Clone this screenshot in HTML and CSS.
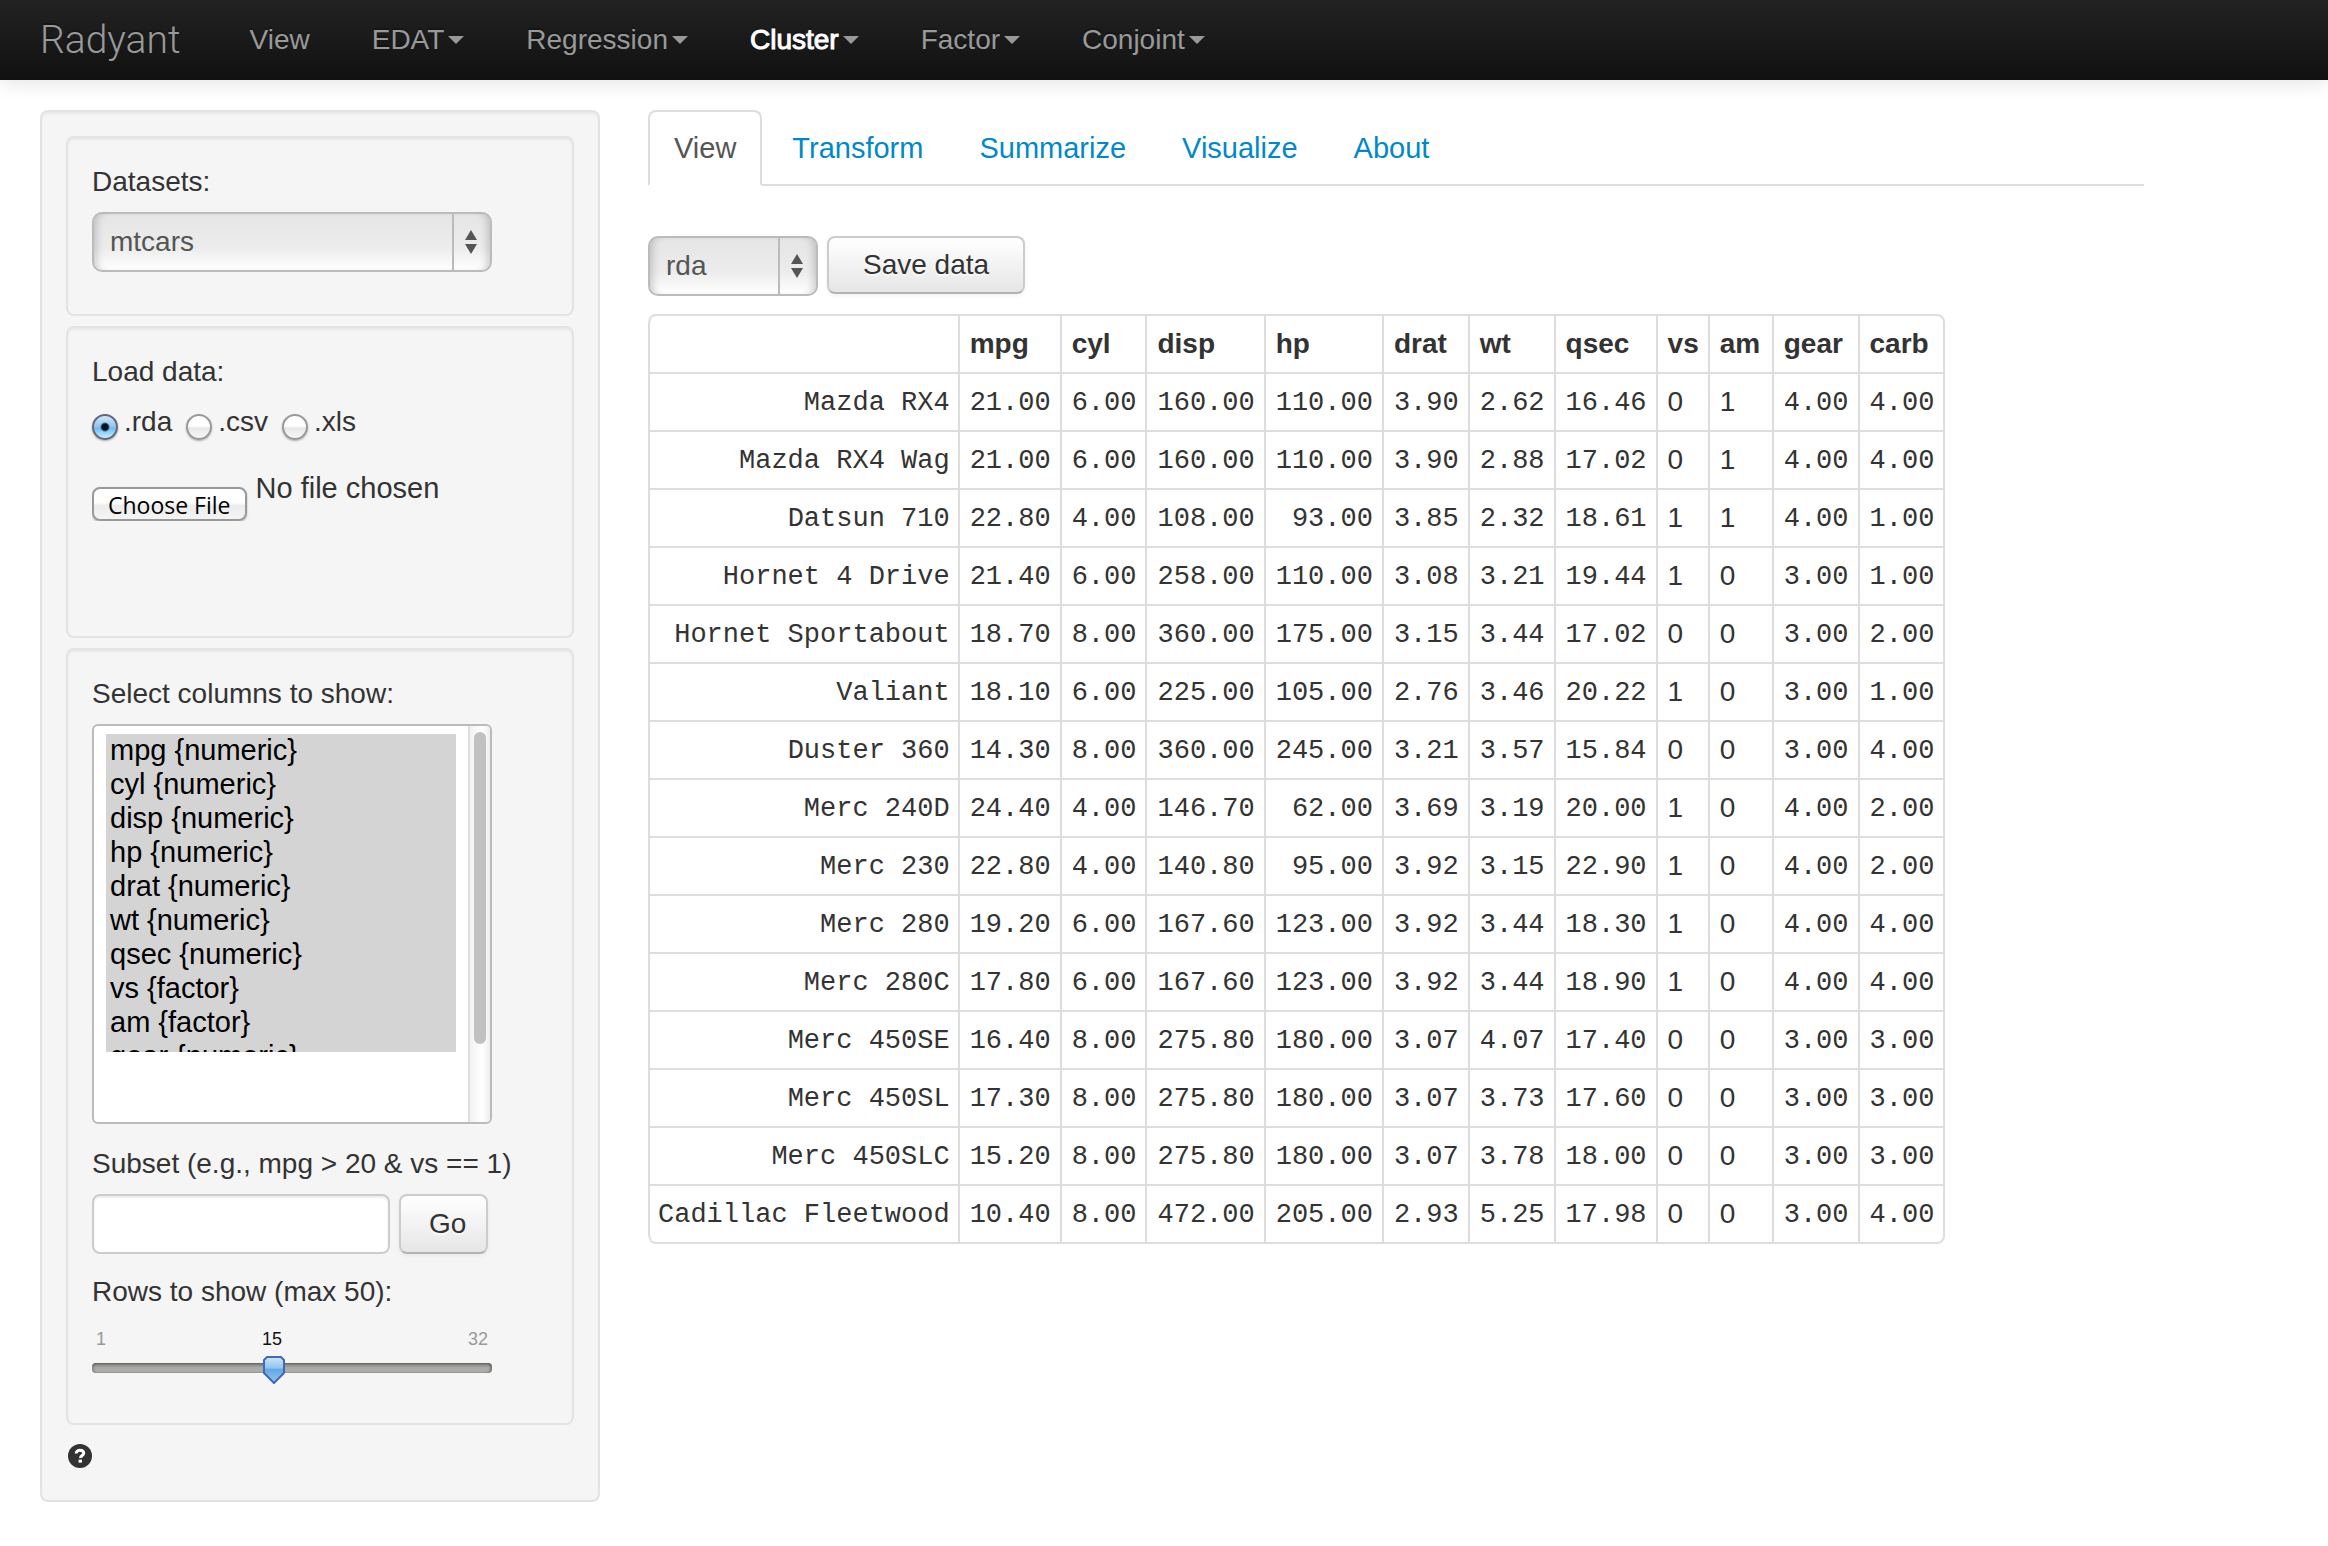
FILE: index.html
```html
<!DOCTYPE html>
<html lang="en">
<head>
<meta charset="utf-8">
<title>Radyant</title>
<link rel="stylesheet" href="styles.css">
</head>
<body>
<header class="navbar">
  <a class="brand" href="#">Radyant</a>
  <nav class="nav">
    <a href="#">View</a>
    <a href="#">EDAT<span class="caret"></span></a>
    <a href="#">Regression<span class="caret"></span></a>
    <a href="#" class="active">Cluster<span class="caret"></span></a>
    <a href="#">Factor<span class="caret"></span></a>
    <a href="#">Conjoint<span class="caret"></span></a>
  </nav>
</header>

<div class="layout">
  <aside class="well sidebar">
    <section class="well panel">
      <label class="label" for="datasets">Datasets:</label>
      <div class="select select-wide">
        <select id="datasets"><option>mtcars</option></select>
        <svg class="arrows" viewBox="0 0 38 56" aria-hidden="true"><path class="rule" d="M1 0V56"/><path d="M13 26 19 16 25 26ZM13 30H25L19 40Z"/></svg>
      </div>
    </section>

    <section class="well panel panel-load">
      <div class="label" id="load-label">Load data:</div>
      <div class="radios" role="radiogroup" aria-labelledby="load-label">
        <label class="radio"><input type="radio" name="format" checked>.rda</label>
        <label class="radio"><input type="radio" name="format">.csv</label>
        <label class="radio"><input type="radio" name="format">.xls</label>
      </div>
      <input class="file" type="file" aria-label="Choose File">
    </section>

    <section class="well panel">
      <label class="label" for="columns">Select columns to show:</label>
      <div class="listbox">
        <select id="columns" multiple>
          <option selected>mpg {numeric}</option>
          <option selected>cyl {numeric}</option>
          <option selected>disp {numeric}</option>
          <option selected>hp {numeric}</option>
          <option selected>drat {numeric}</option>
          <option selected>wt {numeric}</option>
          <option selected>qsec {numeric}</option>
          <option selected>vs {factor}</option>
          <option selected>am {factor}</option>
          <option selected>gear {numeric}</option>
          <option selected>carb {numeric}</option>
        </select>
        <div class="track"><div class="thumb"></div></div>
      </div>
      <label class="label" for="subset">Subset (e.g., mpg &gt; 20 &amp; vs == 1)</label>
      <div class="subset-row">
        <input class="text" id="subset" type="text">
        <button class="btn btn-go" type="button">Go</button>
      </div>
      <label class="label" for="rows">Rows to show (max 50):</label>
      <div class="slider">
        <div class="scale">
          <span>1</span>
          <output for="rows" style="left:45%">15</output>
          <span>32</span>
        </div>
        <input id="rows" type="range" min="1" max="32" value="15">
      </div>
    </section>

    <a class="help" href="#" aria-label="Help">
      <svg viewBox="0 0 24 24" aria-hidden="true"><circle cx="12" cy="12" r="12"/><path class="mark" d="M8.2 9.6C8.2 7.4 9.8 6.200 12 6.200C14.300 6.200 15.700 7.400 15.700 9.200C15.700 11.400 12.500 11.600 12.500 14"/><path class="dot" d="M10.600 15.600H14V18.600H10.600Z"/></svg>
    </a>
  </aside>

  <main>
    <nav class="tabs">
      <a href="#" class="active">View</a>
      <a href="#">Transform</a>
      <a href="#">Summarize</a>
      <a href="#">Visualize</a>
      <a href="#">About</a>
    </nav>
    <div class="toolbar">
      <div class="select select-narrow">
        <select aria-label="File format"><option>rda</option></select>
        <svg class="arrows" viewBox="0 0 38 56" aria-hidden="true"><path class="rule" d="M1 0V56"/><path d="M13 26 19 16 25 26ZM13 30H25L19 40Z"/></svg>
      </div>
      <button class="btn btn-save" type="button">Save data</button>
    </div>
    <table class="data">
      <thead>
        <tr><th></th><th>mpg</th><th>cyl</th><th>disp</th><th>hp</th><th>drat</th><th>wt</th><th>qsec</th><th>vs</th><th class="am">am</th><th>gear</th><th>carb</th></tr>
      </thead>
      <tbody>
        <tr><td>Mazda RX4</td><td>21.00</td><td>6.00</td><td>160.00</td><td>110.00</td><td>3.90</td><td>2.62</td><td>16.46</td><td class="f">0</td><td class="f">1</td><td>4.00</td><td>4.00</td></tr>
        <tr><td>Mazda RX4 Wag</td><td>21.00</td><td>6.00</td><td>160.00</td><td>110.00</td><td>3.90</td><td>2.88</td><td>17.02</td><td class="f">0</td><td class="f">1</td><td>4.00</td><td>4.00</td></tr>
        <tr><td>Datsun 710</td><td>22.80</td><td>4.00</td><td>108.00</td><td>93.00</td><td>3.85</td><td>2.32</td><td>18.61</td><td class="f">1</td><td class="f">1</td><td>4.00</td><td>1.00</td></tr>
        <tr><td>Hornet 4 Drive</td><td>21.40</td><td>6.00</td><td>258.00</td><td>110.00</td><td>3.08</td><td>3.21</td><td>19.44</td><td class="f">1</td><td class="f">0</td><td>3.00</td><td>1.00</td></tr>
        <tr><td>Hornet Sportabout</td><td>18.70</td><td>8.00</td><td>360.00</td><td>175.00</td><td>3.15</td><td>3.44</td><td>17.02</td><td class="f">0</td><td class="f">0</td><td>3.00</td><td>2.00</td></tr>
        <tr><td>Valiant</td><td>18.10</td><td>6.00</td><td>225.00</td><td>105.00</td><td>2.76</td><td>3.46</td><td>20.22</td><td class="f">1</td><td class="f">0</td><td>3.00</td><td>1.00</td></tr>
        <tr><td>Duster 360</td><td>14.30</td><td>8.00</td><td>360.00</td><td>245.00</td><td>3.21</td><td>3.57</td><td>15.84</td><td class="f">0</td><td class="f">0</td><td>3.00</td><td>4.00</td></tr>
        <tr><td>Merc 240D</td><td>24.40</td><td>4.00</td><td>146.70</td><td>62.00</td><td>3.69</td><td>3.19</td><td>20.00</td><td class="f">1</td><td class="f">0</td><td>4.00</td><td>2.00</td></tr>
        <tr><td>Merc 230</td><td>22.80</td><td>4.00</td><td>140.80</td><td>95.00</td><td>3.92</td><td>3.15</td><td>22.90</td><td class="f">1</td><td class="f">0</td><td>4.00</td><td>2.00</td></tr>
        <tr><td>Merc 280</td><td>19.20</td><td>6.00</td><td>167.60</td><td>123.00</td><td>3.92</td><td>3.44</td><td>18.30</td><td class="f">1</td><td class="f">0</td><td>4.00</td><td>4.00</td></tr>
        <tr><td>Merc 280C</td><td>17.80</td><td>6.00</td><td>167.60</td><td>123.00</td><td>3.92</td><td>3.44</td><td>18.90</td><td class="f">1</td><td class="f">0</td><td>4.00</td><td>4.00</td></tr>
        <tr><td>Merc 450SE</td><td>16.40</td><td>8.00</td><td>275.80</td><td>180.00</td><td>3.07</td><td>4.07</td><td>17.40</td><td class="f">0</td><td class="f">0</td><td>3.00</td><td>3.00</td></tr>
        <tr><td>Merc 450SL</td><td>17.30</td><td>8.00</td><td>275.80</td><td>180.00</td><td>3.07</td><td>3.73</td><td>17.60</td><td class="f">0</td><td class="f">0</td><td>3.00</td><td>3.00</td></tr>
        <tr><td>Merc 450SLC</td><td>15.20</td><td>8.00</td><td>275.80</td><td>180.00</td><td>3.07</td><td>3.78</td><td>18.00</td><td class="f">0</td><td class="f">0</td><td>3.00</td><td>3.00</td></tr>
        <tr><td>Cadillac Fleetwood</td><td>10.40</td><td>8.00</td><td>472.00</td><td>205.00</td><td>2.93</td><td>5.25</td><td>17.98</td><td class="f">0</td><td class="f">0</td><td>3.00</td><td>4.00</td></tr>
      </tbody>
    </table>
  </main>
</div>
</body>
</html>
```
FILE: styles.css
```css
* { box-sizing: border-box; }

body {
  margin: 0;
  background: #fff;
  color: #333;
  font: 28px/40px "Liberation Sans", Arial, sans-serif;
}

a { color: #0088cc; text-decoration: none; }
button, input, select { font: inherit; margin: 0; }

/* Top bar */
.navbar {
  display: flex;
  align-items: center;
  height: 80px;
  padding: 0 40px;
  background: linear-gradient(#222, #111);
  box-shadow: 0 2px 20px rgba(0, 0, 0, .12);
}
.navbar a { color: #999; text-shadow: 0 -2px 0 rgba(0, 0, 0, .25); }
.navbar .brand { font: 300 39px/40px Roboto, "Liberation Sans", sans-serif; padding-right: 38px; }
.nav { display: flex; }
.nav a { display: flex; align-items: center; padding: 0 31px; }
.nav .active { color: #fff; -webkit-text-stroke: 1px #fff; }
.caret {
  margin-left: 4px;
  border: 8px solid transparent;
  border-top-color: #999;
  border-bottom: 0;
}

/* Page grid */
.layout {
  display: grid;
  grid-template-columns: 560px minmax(0, 1fr);
  align-items: start;
  gap: 48px;
  padding: 30px 184px 40px 40px;
}

.well {
  padding: 24px;
  background: #f5f5f5;
  border: 2px solid #e3e3e3;
  border-radius: 8px;
  box-shadow: inset 0 2px 2px rgba(0, 0, 0, .05);
}
.sidebar { display: flex; flex-direction: column; gap: 10px; padding-bottom: 32px; }
.panel { width: 508px; padding-bottom: 42px; }
.panel-load { min-height: 312px; }
.label { display: block; margin-bottom: 10px; }

/* Drop-downs */
.select {
  position: relative;
  height: 60px;
  border: 2px solid #bbb;
  border-radius: 10px;
  background: linear-gradient(#e5e5e5, #ececec 60%, #fff);
  box-shadow: inset 8px 0 8px -6px rgba(0, 0, 0, .2), inset -8px 0 8px -6px rgba(0, 0, 0, .2);
}
.select select {
  width: 100%;
  height: 56px;
  padding: 0 44px 0 16px;
  border: 0;
  background: none;
  color: #555;
  appearance: none;
}
.select-wide { width: 400px; }
.select-narrow { width: 170px; }
.arrows {
  position: absolute;
  top: 0;
  right: 0;
  width: 38px;
  height: 56px;
  fill: #555;
  pointer-events: none;
}
.arrows .rule { stroke: #bbb; stroke-width: 2; }

/* Load data */
.radios { display: flex; gap: 14px; }
.radio { display: flex; gap: 6px; }
.radio input {
  appearance: none;
  width: 26px;
  height: 26px;
  margin: 12px 0 0;
  border: 2px solid #999;
  border-radius: 50%;
  background: linear-gradient(#fff 45%, #e8e8e8 55%, #f8f8f8);
  box-shadow: 0 1px 2px rgba(0, 0, 0, .3);
}
.radio input:checked {
  border-color: #667;
  background: radial-gradient(circle, #012 3px, transparent 5px), linear-gradient(#d4e6f8, #8cc4f2 50%, #6fb9f3 55%, #c4f0ff);
}
.file { display: block; width: 400px; margin-top: 26px; color: #333; font-size: 29px; }
.file::file-selector-button {
  height: 34px;
  margin: 17px 9px 0 0;
  padding: 2px 14px 0;
  border: 2px solid #999;
  border-radius: 8px;
  background: linear-gradient(#fff 45%, #ececec 55%, #f4f4f4);
  box-shadow: 0 1px 2px rgba(0, 0, 0, .3);
  color: #000;
  font: 23px/28px "Open Sans", "Noto Sans", sans-serif;
  vertical-align: -16px;
}

/* Column list */
.listbox {
  display: flex;
  align-items: flex-start;
  justify-content: space-between;
  width: 400px;
  height: 400px;
  margin-bottom: 20px;
  border: 2px solid #bbb;
  border-radius: 6px;
  background: #fff;
  overflow: hidden;
}
.listbox select {
  width: 350px;
  height: 318px;
  margin: 8px 0 0 12px;
  padding: 0;
  border: 0;
  border-radius: 0;
  outline: 0;
  background: #fff;
  color: #000;
  font-size: 29px;
  scrollbar-width: none;
}
.listbox option { min-height: 34px; padding: 0 4px; line-height: 34px; color: #000; }
.listbox option:checked { background: linear-gradient(#d4d4d4, #d4d4d4); color: #000; }
.track {
  width: 22px;
  height: 100%;
  padding: 6px 4px;
  border-left: 2px solid #ddd;
  background: linear-gradient(to right, #f2f2f2, #fff 60%, #eee);
}
.thumb { width: 12px; height: 312px; border-radius: 6px; background: #c1c1c1; }

/* Subset and rows */
.subset-row { display: flex; gap: 9px; margin-bottom: 18px; }
.text {
  width: 298px;
  height: 60px;
  padding: 8px 12px;
  border: 2px solid #ccc;
  border-radius: 8px;
  background: #fff;
  box-shadow: inset 0 2px 2px rgba(0, 0, 0, .075);
}
.btn {
  border: 2px solid #ccc;
  border-bottom-color: #b3b3b3;
  border-radius: 8px;
  background: linear-gradient(#fff, #e6e6e6);
  box-shadow: 0 2px 4px rgba(0, 0, 0, .05);
  color: #333;
  text-shadow: 0 2px 2px rgba(255, 255, 255, .75);
}
.btn-go { height: 60px; padding: 0 20px 0 28px; }
.btn-save { height: 58px; padding: 0 34px; }

.slider { width: 400px; padding-top: 7px; }
.scale {
  position: relative;
  display: flex;
  justify-content: space-between;
  padding: 0 4px;
  color: #999;
  font-size: 18px;
  line-height: 20px;
}
.scale output { position: absolute; transform: translateX(-50%); color: #111; }
.slider input {
  display: block;
  appearance: none;
  width: 100%;
  height: 26px;
  margin-top: 6px;
  background: none;
}
.slider input::-webkit-slider-runnable-track {
  height: 10px;
  border-radius: 4px;
  background: linear-gradient(#757572, #a8a8a6 45%, #b0b0ae);
  box-shadow: inset 2px 0 2px rgba(0, 0, 0, .2), inset -2px 0 2px rgba(0, 0, 0, .3);
}
.slider input::-webkit-slider-thumb {
  appearance: none;
  width: 22px;
  height: 28px;
  margin-top: -7px;
  background: url("data:image/svg+xml,%3Csvg xmlns='http://www.w3.org/2000/svg' viewBox='0 0 22 28'%3E%3ClinearGradient id='g' x2='0' y2='1'%3E%3Cstop stop-color='%23cde6f8'/%3E%3Cstop offset='.42' stop-color='%2390c6ee'/%3E%3Cstop offset='.48' stop-color='%2362a8e4'/%3E%3Cstop offset='1' stop-color='%2390c8f0'/%3E%3C/linearGradient%3E%3Cpath d='M4 1H18L21 4V17L11 27 1 17V4Z' fill='url(%23g)' stroke='%234468b4' stroke-width='2' stroke-linejoin='round'/%3E%3C/svg%3E") center / 22px 28px no-repeat;
}

.help { display: block; width: 24px; height: 24px; margin-top: 9px; margin-left: 2px; }
.help svg { display: block; width: 24px; height: 24px; fill: #333; }
.help .mark { fill: none; stroke: #fff; stroke-width: 3; }
.help .dot { fill: #fff; }

/* Tabs */
.tabs { display: flex; gap: 4px; margin-bottom: 50px; border-bottom: 2px solid #ddd; font-size: 29px; }
.tabs a {
  margin-bottom: -2px;
  padding: 16px 24px;
  border: 2px solid transparent;
  border-radius: 8px 8px 0 0;
}
.tabs .active { border-color: #ddd #ddd #fff; background: #fff; color: #555; }

.toolbar { display: flex; gap: 9px; margin-bottom: 18px; }

/* Data table */
.data {
  border: 2px solid #ddd;
  border-left: 0;
  border-radius: 8px;
  border-spacing: 0;
}
.data th, .data td {
  height: 56px;
  padding: 8px 9px 8px 10px;
  border-left: 2px solid #ddd;
  line-height: 40px;
  text-align: left;
  white-space: nowrap;
}
.data .am { width: 64px; }
.data td {
  height: 58px;
  padding-top: 9px;
  padding-bottom: 7px;
  border-top: 2px solid #ddd;
  font-family: "Liberation Mono", "Courier New", monospace;
  font-size: 27px;
  text-align: right;
}
.data .f {
  padding-top: 8px;
  padding-bottom: 8px;
  font-family: inherit;
  font-size: 28px;
  text-align: left;
}
.data th:first-child { border-top-left-radius: 8px; }
.data td:first-child { padding-left: 8px; padding-right: 8px; }
.data tr:last-child td:first-child { border-bottom-left-radius: 8px; }
```
